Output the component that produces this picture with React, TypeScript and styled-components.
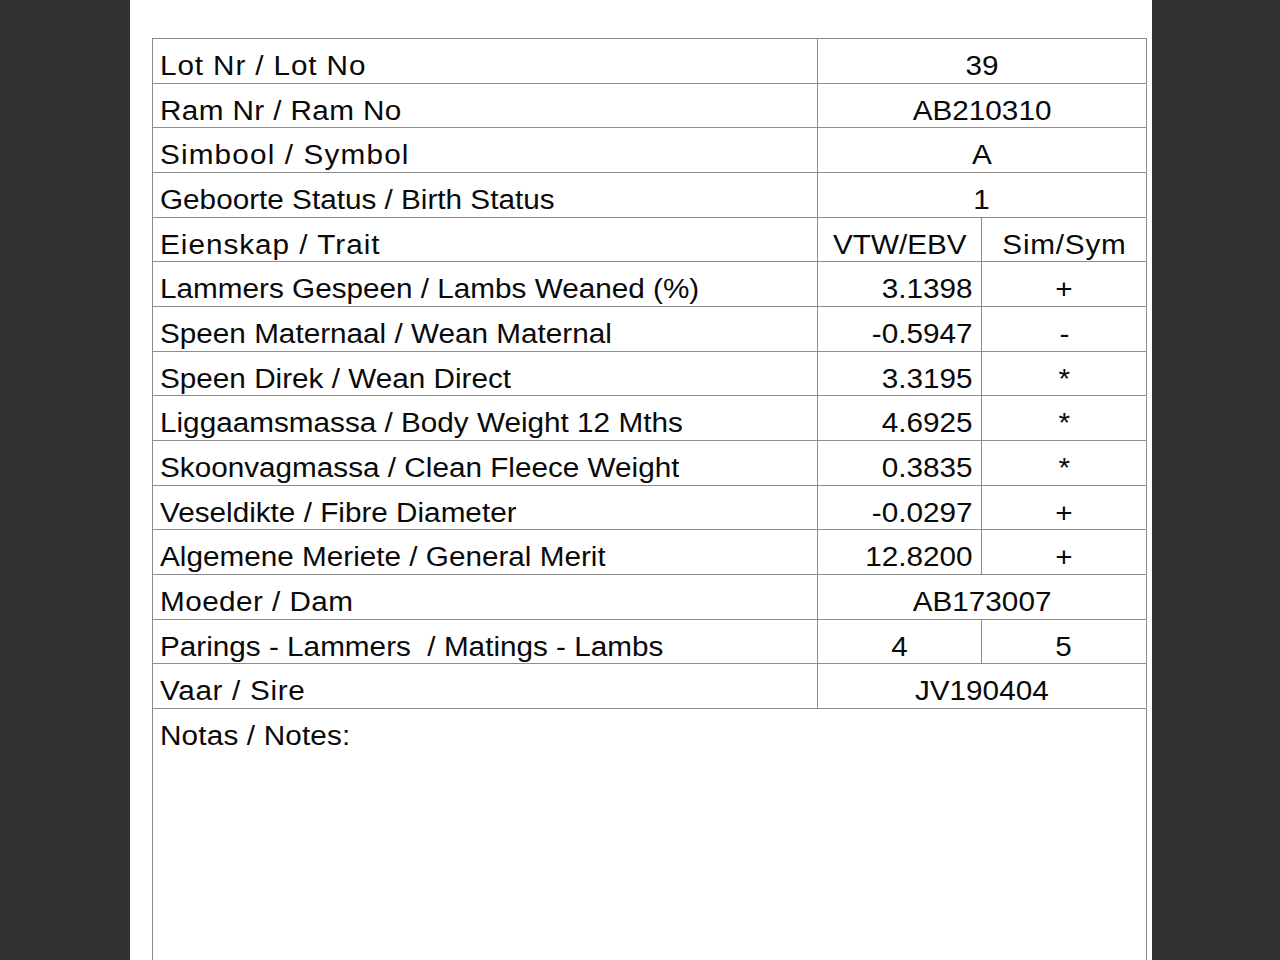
import styled, { createGlobalStyle } from "styled-components";

const GlobalStyle = createGlobalStyle`
  html, body {
    margin: 0;
    padding: 0;
    background: #323232;
    overflow: hidden;
  }
  body {
    font-family: "Liberation Sans", Arial, Helvetica, sans-serif;
    color: #0a0a0a;
  }
`;

const Backdrop = styled.div`
  display: flex;
  justify-content: center;
  height: 960px;
  padding-left: 2px;
`;

const Page = styled.div`
  width: 1022px;
  background: #fff;
  padding: 38px 5px 0 22px;
  box-sizing: border-box;
`;

const Sheet = styled.div`
  border: 1px solid #8c8c8c;
  border-bottom: none;
  display: flex;
  flex-direction: column;
`;

const Row = styled.div<{ $tall?: boolean }>`
  display: flex;
  height: ${(p) => (p.$tall ? "400px" : "44.667px")};
  box-sizing: border-box;
  border-bottom: 1px solid #8c8c8c;
`;

const Label = styled.div<{ $wide?: boolean }>`
  width: ${(p) => (p.$wide ? "auto" : "665px")};
  flex: ${(p) => (p.$wide ? "1" : "none")};
  box-sizing: border-box;
  border-right: ${(p) => (p.$wide ? "none" : "1px solid #8c8c8c")};
  padding-left: 7px;
`;

const Cell = styled.div<{ $w?: string; $align?: "center" | "right"; $last?: boolean }>`
  width: ${(p) => p.$w ?? "auto"};
  flex: ${(p) => (p.$w ? "none" : "1")};
  box-sizing: border-box;
  text-align: ${(p) => p.$align ?? "center"};
  padding-right: ${(p) => (p.$align === "right" ? "8px" : "0")};
  border-right: ${(p) => (p.$last ? "none" : "1px solid #8c8c8c")};
`;

// the sheet's type is a bit wider than Arial and the descenders get clipped
const Text = styled.span<{ $origin?: "left" | "center" | "right"; $track?: number }>`
  display: inline-block;
  margin-top: 14px;
  height: 28px;
  line-height: 27px;
  font-size: 27px;
  letter-spacing: ${(p) => p.$track ?? 0}px;
  white-space: pre;
  overflow: hidden;
  transform: scaleX(1.1);
  transform-origin: ${(p) => p.$origin ?? "center"} top;
`;

type Line =
  | { kind: "single"; label: string; value: string; track?: number }
  | { kind: "pair"; label: string; a: string; b: string; numeric?: boolean; track?: number };

const lines: Line[] = [
  { kind: "single", label: "Lot Nr / Lot No", value: "39", track: 0.8 },
  { kind: "single", label: "Ram Nr / Ram No", value: "AB210310", track: 0.35 },
  { kind: "single", label: "Simbool / Symbol", value: "A", track: 1.05 },
  { kind: "single", label: "Geboorte Status / Birth Status", value: "1" },
  { kind: "pair", label: "Eienskap / Trait", a: "VTW/EBV", b: "Sim/Sym", track: 0.9 },
  { kind: "pair", label: "Lammers Gespeen / Lambs Weaned (%)", a: "3.1398", b: "+", numeric: true },
  { kind: "pair", label: "Speen Maternaal / Wean Maternal", a: "-0.5947", b: "-", numeric: true },
  { kind: "pair", label: "Speen Direk / Wean Direct", a: "3.3195", b: "*", numeric: true },
  { kind: "pair", label: "Liggaamsmassa / Body Weight 12 Mths", a: "4.6925", b: "*", numeric: true },
  { kind: "pair", label: "Skoonvagmassa / Clean Fleece Weight", a: "0.3835", b: "*", numeric: true },
  { kind: "pair", label: "Veseldikte / Fibre Diameter", a: "-0.0297", b: "+", numeric: true },
  { kind: "pair", label: "Algemene Meriete / General Merit", a: "12.8200", b: "+", numeric: true },
  { kind: "single", label: "Moeder / Dam", value: "AB173007", track: 0.4 },
  { kind: "pair", label: "Parings - Lammers  / Matings - Lambs", a: "4", b: "5" },
  { kind: "single", label: "Vaar / Sire", value: "JV190404", track: 0.6 },
];

export default function App() {
  return (
    <>
      <GlobalStyle />
      <Backdrop>
        <Page>
          <Sheet>
            {lines.map((l) => (
              <Row key={l.label}>
                <Label>
                  <Text $origin="left" $track={l.track}>
                    {l.label}
                  </Text>
                </Label>
                {l.kind === "single" ? (
                  <Cell $last>
                    <Text>{l.value}</Text>
                  </Cell>
                ) : (
                  <>
                    <Cell $w="164px" $align={l.numeric ? "right" : "center"}>
                      <Text $origin={l.numeric ? "right" : "center"}>{l.a}</Text>
                    </Cell>
                    <Cell $last>
                      <Text $track={l.numeric ? 0 : 0.7}>{l.b}</Text>
                    </Cell>
                  </>
                )}
              </Row>
            ))}
            <Row $tall>
              <Label $wide>
                <Text $origin="left" $track={0.15}>
                  Notas / Notes:
                </Text>
              </Label>
            </Row>
          </Sheet>
        </Page>
      </Backdrop>
    </>
  );
}
